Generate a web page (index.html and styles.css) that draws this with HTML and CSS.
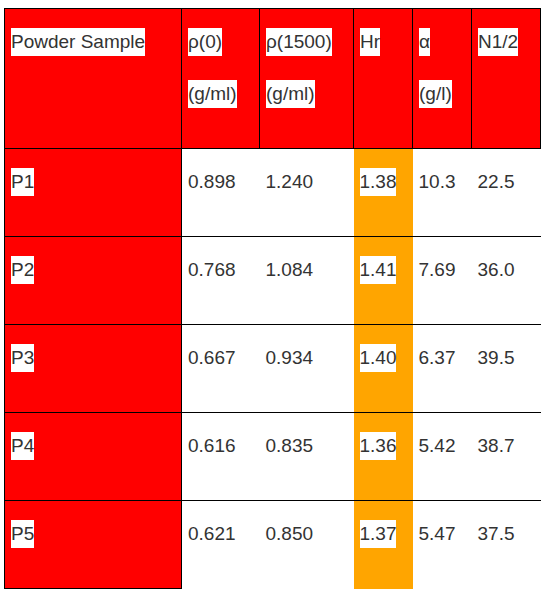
FILE: index.html
```html
<!DOCTYPE html>
<html lang="en">
<head>
    <meta charset="UTF-8">
    <meta name="viewport" content="width=device-width, initial-scale=1.0">
    <title>Powder Samples</title>
    <link rel="stylesheet" href="styles.css">
</head>
<body>
    <table class="data-table">
        <colgroup>
            <col class="col-sample">
            <col class="col-rho0">
            <col class="col-rho1500">
            <col class="col-hr">
            <col class="col-alpha">
            <col class="col-n">
        </colgroup>
        <thead>
            <tr>
                <th><p><span>Powder Sample</span></p></th>
                <th><p><span>ρ(0)</span></p><p><span>(g/ml)</span></p></th>
                <th><p><span>ρ(1500)</span></p><p><span>(g/ml)</span></p></th>
                <th><p><span>Hr</span></p></th>
                <th><p><span>α</span></p><p><span>(g/l)</span></p></th>
                <th><p><span>N1/2</span></p></th>
            </tr>
        </thead>
        <tbody>
            <tr>
                <td class="sample"><span>P1</span></td>
                <td><span>0.898</span></td>
                <td><span>1.240</span></td>
                <td class="hr"><span>1.38</span></td>
                <td><span>10.3</span></td>
                <td><span>22.5</span></td>
            </tr>
            <tr>
                <td class="sample"><span>P2</span></td>
                <td><span>0.768</span></td>
                <td><span>1.084</span></td>
                <td class="hr"><span>1.41</span></td>
                <td><span>7.69</span></td>
                <td><span>36.0</span></td>
            </tr>
            <tr>
                <td class="sample"><span>P3</span></td>
                <td><span>0.667</span></td>
                <td><span>0.934</span></td>
                <td class="hr"><span>1.40</span></td>
                <td><span>6.37</span></td>
                <td><span>39.5</span></td>
            </tr>
            <tr>
                <td class="sample"><span>P4</span></td>
                <td><span>0.616</span></td>
                <td><span>0.835</span></td>
                <td class="hr"><span>1.36</span></td>
                <td><span>5.42</span></td>
                <td><span>38.7</span></td>
            </tr>
            <tr>
                <td class="sample"><span>P5</span></td>
                <td><span>0.621</span></td>
                <td><span>0.850</span></td>
                <td class="hr"><span>1.37</span></td>
                <td><span>5.47</span></td>
                <td><span>37.5</span></td>
            </tr>
        </tbody>
    </table>
</body>
</html>
```

FILE: styles.css
```css
* {
    margin: 0;
    padding: 0;
    box-sizing: border-box;
}

body {
    background-color: #fff;
    color: #333;
    font-family: "Liberation Sans", Arial, sans-serif;
    font-size: 19px;
    padding: 8px 4px;
}

.data-table {
    border-collapse: collapse;
    table-layout: fixed;
    width: 536px;
}

.col-sample { width: 177px; }
.col-rho0 { width: 78px; }
.col-rho1500 { width: 94px; }
.col-hr { width: 59px; }
.col-alpha { width: 59px; }
.col-n { width: 69px; }

th, td {
    text-align: left;
    vertical-align: top;
    font-weight: normal;
    padding: 19px 4px 0 6px;
    white-space: nowrap;
}

th span, td span {
    display: inline-block;
    line-height: 28px;
    background-color: #fff;
}

thead tr {
    height: 140px;
}

th {
    background-color: #ff0000;
    border: 1px solid #000;
}

th p {
    margin-bottom: 24px;
}

tbody tr {
    height: 88px;
}

td {
    border-bottom: 1px solid #000;
}

td.sample {
    background-color: #ff0000;
    border-left: 1px solid #000;
    border-right: 1px solid #000;
}

td.hr {
    background-color: #ffa500;
}

tbody tr:last-child td {
    border-bottom: none;
}

tbody tr:last-child td.sample {
    border-bottom: 1px solid #000;
}
```
